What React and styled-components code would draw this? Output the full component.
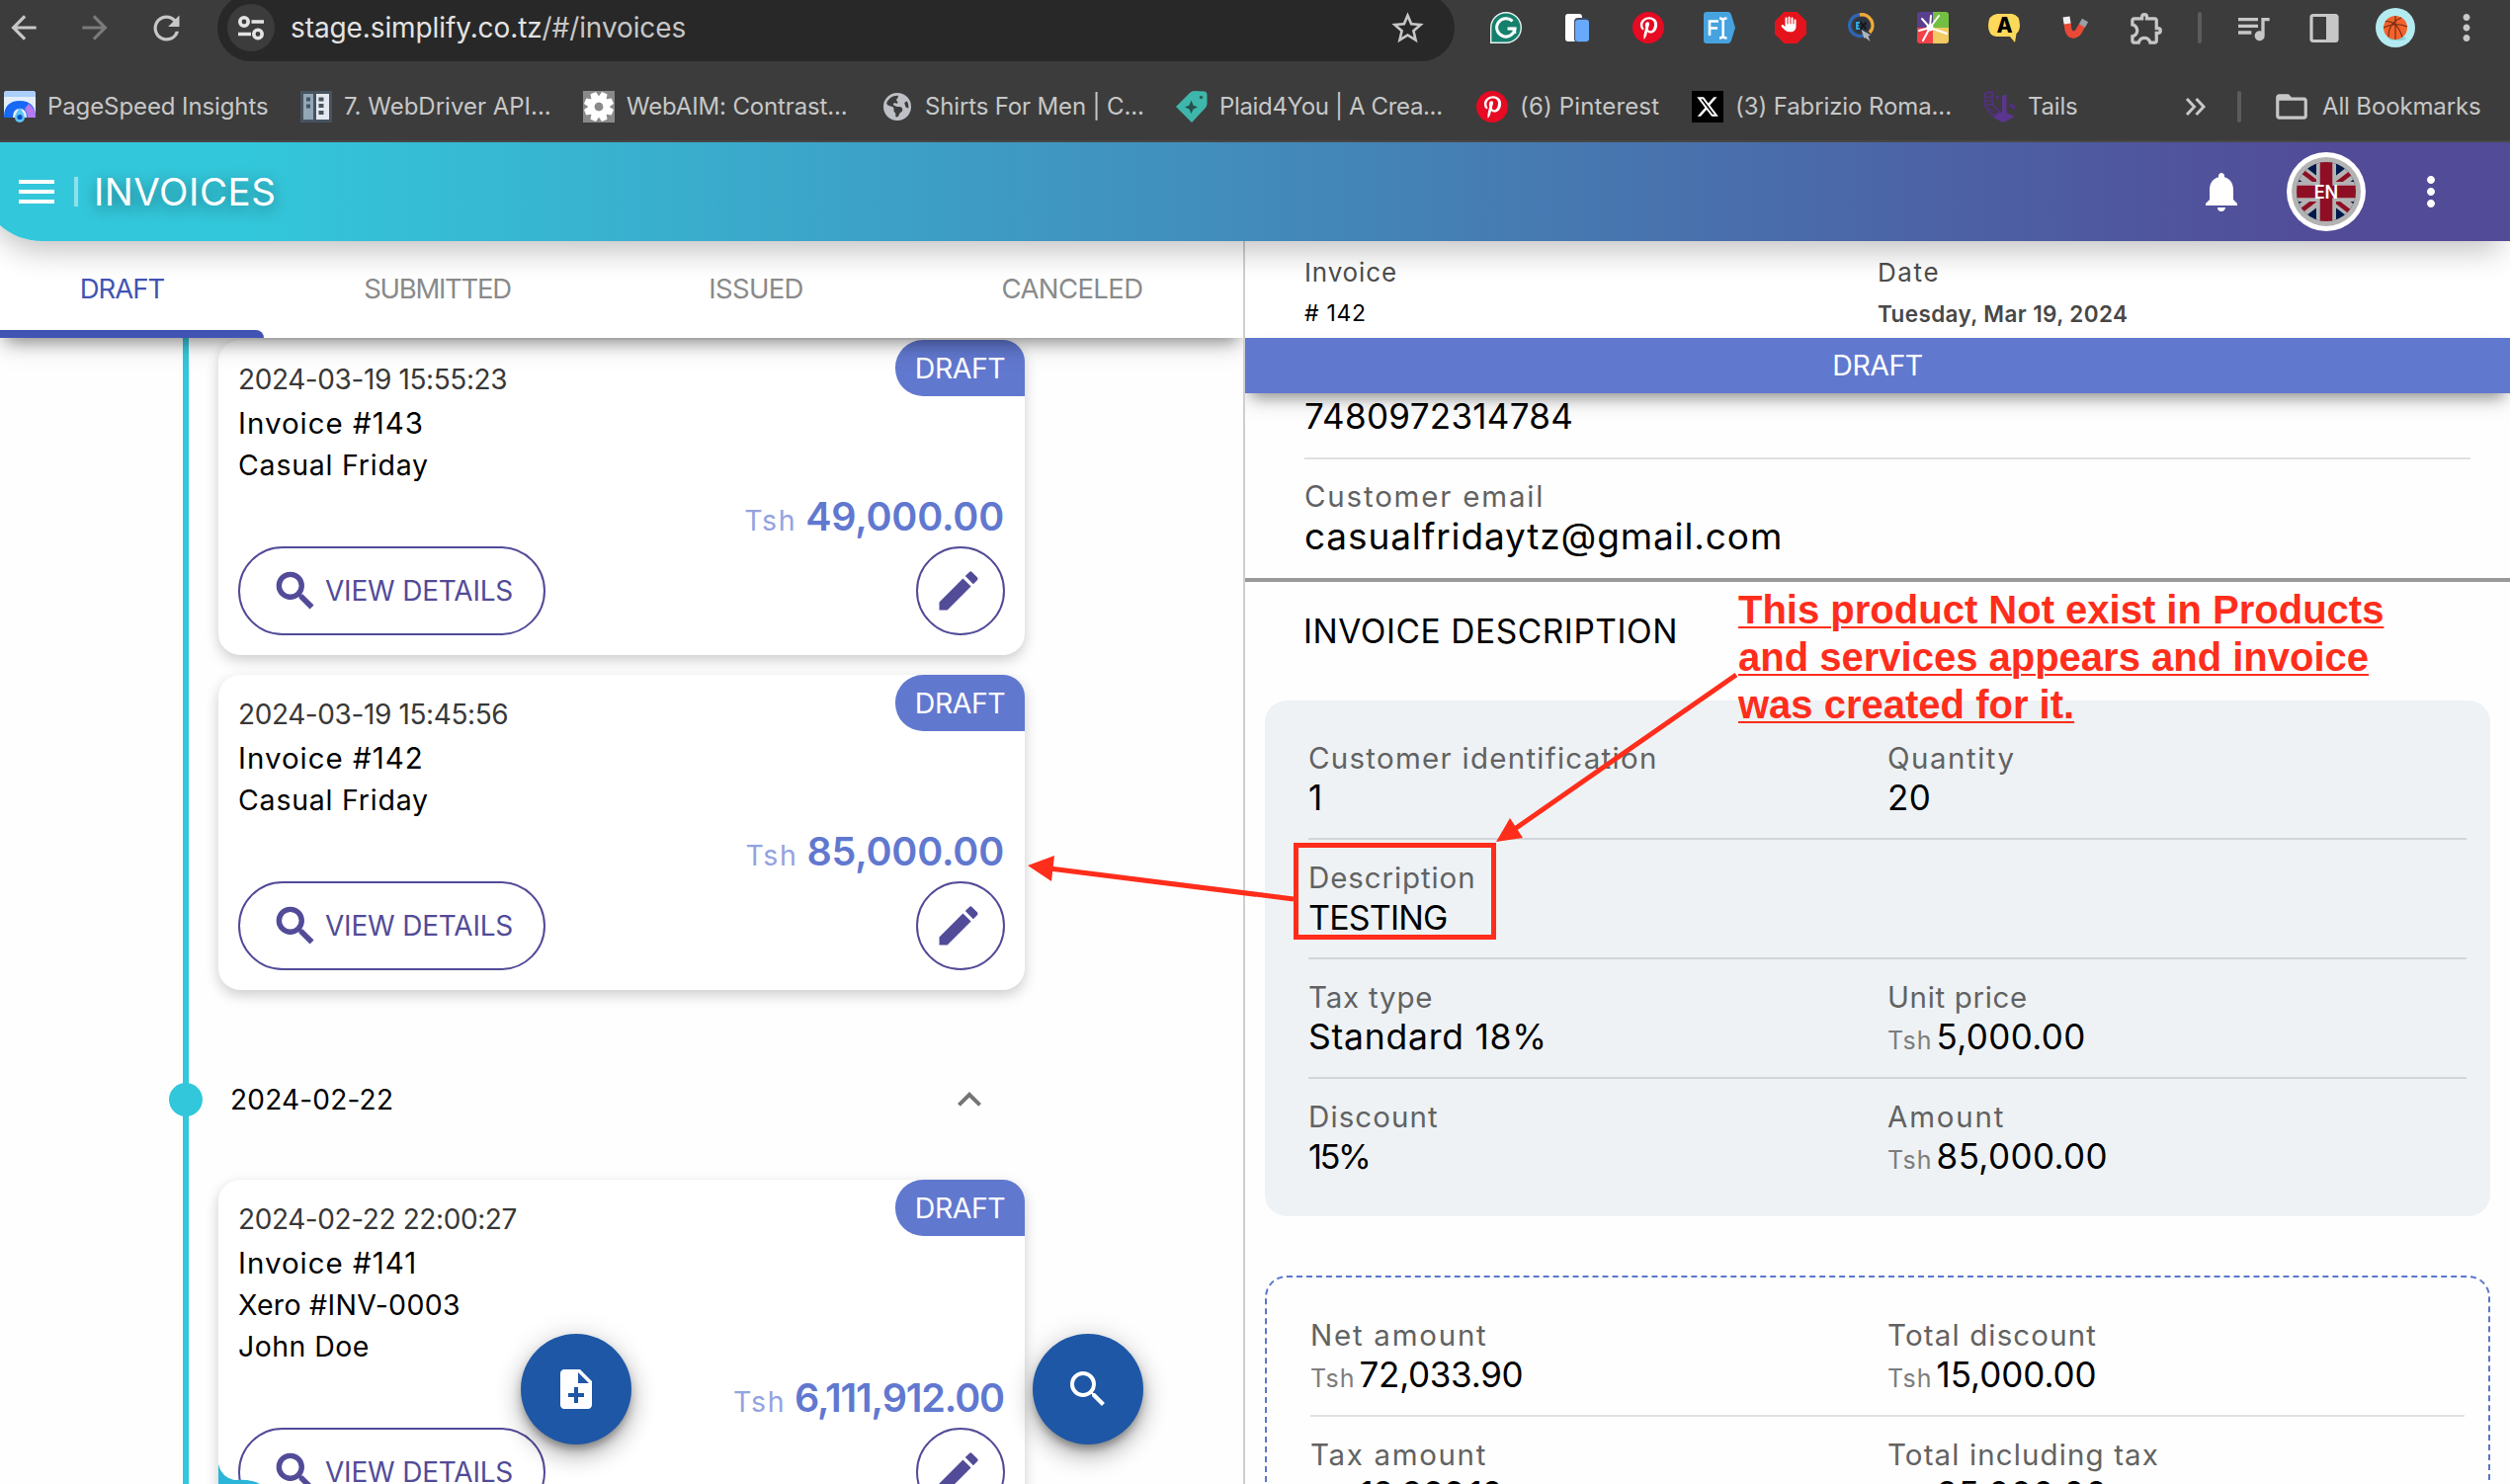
import React from 'react';
import styled, { createGlobalStyle, css } from 'styled-components';
import {
  MdArrowBack, MdArrowForward, MdRefresh, MdStarBorder, MdOutlineExtension, MdQueueMusic,
  MdFolderOpen, MdSearch, MdEdit, MdNotifications, MdMoreVert, MdNoteAdd,
  MdKeyboardArrowUp, MdMenu,
} from 'react-icons/md';
import { FaPinterestP, FaXTwitter, FaHand, FaEarthAmericas } from 'react-icons/fa6';

const teal = '#33c7db';
const violet = '#524b98';
const blue = '#6178cf';
const red = '#ff2d1b';

const GlobalStyle = createGlobalStyle`
  * { box-sizing: border-box; }
  body { margin: 0; background: #fefefe; font-family: Inter, "Open Sans", sans-serif; color: #000; overflow: hidden; }
  svg { display: block; flex: none; }
`;

const text = css`
  white-space: pre;
  letter-spacing: ${(p) => p.$ls || 0}px;
`;

const Page = styled.div`
  position: relative;
  width: 2540px;
  height: 1502px;
  overflow: hidden;
  display: flex;
  flex-direction: column;
`;

/* ---------- browser chrome ---------- */
const Chrome = styled.div`
  height: 144px;
  flex: none;
  background: #3c3c3c;
  border-bottom: 2px solid #474747;
  display: flex;
  flex-direction: column;
  gap: 18px;
`;
const Toolbar = styled.div`
  height: 56px;
  display: flex;
  align-items: center;
`;
const NavButtons = styled.div`
  width: 220px;
  padding-left: 5px;
  display: flex;
  align-items: center;
  gap: 34px;
  color: #c7c7c7;
`;
const UrlBar = styled.div`
  width: 1252px;
  height: 68px;
  border-radius: 34px;
  background: #282828;
  display: flex;
  align-items: center;
  padding: 0 28px 0 10px;
`;
const SiteInfo = styled.div`
  width: 48px;
  height: 48px;
  border-radius: 50%;
  background: #3c3c3c;
  display: grid;
  place-items: center;
`;
const Url = styled.div`
  ${text}
  flex: 1;
  margin-left: 16px;
  font-size: 28px;
  color: #c7c7c7;
  b { font-weight: 400; color: #e3e3e3; }
`;
const Cell = styled.div`
  width: ${(p) => p.$w || 72}px;
  flex: none;
  display: flex;
  justify-content: center;
  align-items: center;
  color: #c7c7c7;
`;
const Separator = styled.div`
  width: 4px;
  height: 32px;
  border-radius: 2px;
  background: #5c5c5c;
`;
const Disc = styled.div`
  width: ${(p) => p.$size || 32}px;
  height: ${(p) => p.$size || 32}px;
  border-radius: 50%;
  background: ${(p) => p.$bg};
  color: #fff;
  display: grid;
  place-items: center;
`;
const XTile = styled.div`
  width: 32px;
  height: 32px;
  background: #000;
  color: #fff;
  display: grid;
  place-items: center;
`;
const Bookmarks = styled.div`
  height: 68px;
  display: flex;
  align-items: center;
  padding-left: 4px;
`;
const Bookmark = styled.div`
  width: ${(p) => p.$w}px;
  flex: none;
  display: flex;
  align-items: center;
  gap: 12px;
  color: #c7c7c7;
`;
const BookmarkLabel = styled.span`
  ${text}
  font-size: 24px;
  line-height: 30px;
  padding-bottom: 1px;
`;

/* ---------- app bar ---------- */
const AppBar = styled.header`
  position: relative;
  z-index: 3;
  height: 100px;
  flex: none;
  margin-left: -21px;
  display: flex;
  align-items: center;
  padding: 0 56px 0 34px;
  color: #fff;
  border-bottom-left-radius: 63px;
  background: linear-gradient(90deg, ${teal} 10.5%, ${violet} 93%);
  box-shadow: 0 20px 30px -10px rgba(0, 0, 0, 0.24);
`;
const BarRule = styled.div`
  width: 4px;
  height: 30px;
  margin: 0 16px 0 14px;
  background: rgba(255, 255, 255, 0.45);
`;
const Title = styled.h1`
  ${text}
  flex: 1;
  margin: 0;
  font-size: 38.5px;
  font-weight: 400;
  text-shadow: 0 4px 16px rgba(0, 0, 0, 0.45);
`;
const Actions = styled.div`
  display: flex;
  align-items: center;
  gap: 42px;
`;

/* ---------- panels ---------- */
const Main = styled.main`
  flex: 1;
  min-height: 0;
  display: flex;
`;
const ListPanel = styled.section`
  width: 1258px;
  display: flex;
  flex-direction: column;
  overflow: hidden;
`;
const Tabs = styled.nav`
  position: relative;
  z-index: 2;
  height: 98px;
  flex: none;
  display: flex;
  background: #fff;
  box-shadow: 0 10px 16px -6px rgba(0, 0, 0, 0.42), 0 12px 26px 0 rgba(0, 0, 0, 0.08);
`;
const Tab = styled.div`
  ${text}
  position: relative;
  width: ${(p) => p.$w}px;
  flex: none;
  padding: 0 ${(p) => (p.$active ? 20 : 0)}px 2px 0;
  display: flex;
  align-items: center;
  justify-content: center;
  font-size: 27.5px;
  color: ${(p) => (p.$active ? '#4154b3' : '#8a8a8a')};
  ${(p) => p.$active && css`
    &::after {
      content: '';
      position: absolute;
      left: 0;
      right: 0;
      bottom: 0;
      height: 8px;
      border-top-right-radius: 8px;
      background: #4154b3;
    }
  `}
`;
const Timeline = styled.div`
  flex: 1;
  min-height: 0;
  margin-left: 185px;
  border-left: 6px solid ${teal};
  padding: 2px 0 0 30px;
  display: flex;
  flex-direction: column;
  gap: 20px;
`;
const Card = styled.article`
  position: relative;
  width: 816px;
  flex: none;
  padding: 19px 20px 20px;
  border-radius: 22px;
  background: #fff;
  box-shadow: 0 5px 14px rgba(0, 0, 0, 0.2);
`;
const Badge = styled.div`
  ${text}
  position: absolute;
  top: 0;
  right: 0;
  width: 131px;
  height: 57px;
  border-radius: 28px 22px 0 28px;
  background: ${blue};
  color: #fff;
  font-size: 28.5px;
  display: grid;
  place-items: center;
`;
const Stamp = styled.div`
  ${text}
  font-size: 28px;
  line-height: 43px;
  color: #383838;
`;
const InvoiceNo = styled.div`
  ${text}
  font-size: 29.5px;
  line-height: 44px;
`;
const Party = styled.div`
  ${text}
  font-size: 28.5px;
  line-height: 42px;
`;
const CardTotal = styled.div`
  ${text}
  height: 61px;
  padding-right: 1px;
  display: flex;
  justify-content: flex-end;
  align-items: baseline;
  line-height: 62px;
  font-size: 39.5px;
  font-weight: 600;
  color: ${blue};
`;
const CardCurrency = styled.span`
  font-size: 28.5px;
  font-weight: 400;
  letter-spacing: 1.6px;
  margin-right: 9px;
  color: #93a3e0;
`;
const CardActions = styled.div`
  display: flex;
  justify-content: space-between;
`;
const Pill = styled.button`
  ${text}
  width: 311px;
  height: 90px;
  padding: 0 0 0 31px;
  display: flex;
  align-items: center;
  gap: 5px;
  border: 2.5px solid ${violet};
  border-radius: 45px;
  background: none;
  color: ${violet};
  font: 400 28px Inter, sans-serif;
  path:not([fill='none']) { stroke: currentColor; stroke-width: 0.6; }
`;
const RoundButton = styled.button`
  width: 90px;
  height: 90px;
  padding: 0 5px 0 0;
  display: grid;
  place-items: center;
  border: 2.5px solid ${violet};
  border-radius: 50%;
  background: none;
  color: ${violet};
`;
const DateRow = styled.div`
  ${text}
  position: relative;
  width: 816px;
  height: 162px;
  flex: none;
  margin: 10px 0 -20px;
  padding: 0 32px 0 12px;
  display: flex;
  align-items: center;
  justify-content: space-between;
  font-size: 28px;
  &::before {
    content: '';
    position: absolute;
    left: -50px;
    width: 34px;
    height: 34px;
    border-radius: 50%;
    background: ${teal};
  }
  svg { color: #757575; }
`;
const Wave = styled.svg`
  position: absolute;
  left: 221px;
  bottom: 0;
`;
const Fab = styled.button`
  position: absolute;
  z-index: 4;
  top: 1350px;
  left: ${(p) => p.$x}px;
  width: 112px;
  height: 112px;
  padding: 0;
  display: grid;
  place-items: center;
  border: 0;
  border-radius: 50%;
  background: #1e57a6;
  color: #fff;
  box-shadow: 0 6px 10px -2px rgba(0, 0, 0, 0.35), 0 12px 24px rgba(0, 0, 0, 0.24), 0 2px 30px rgba(0, 0, 0, 0.12);
`;

/* ---------- invoice detail ---------- */
const Detail = styled.section`
  flex: 1;
  min-width: 0;
  border-left: 2px solid #cfcfcf;
  display: flex;
  flex-direction: column;
  overflow: hidden;
  & > * { flex: none; }
`;
const DetailHead = styled.div`
  height: 98px;
  padding: 11px 60px 0 60px;
  display: grid;
  grid-template-columns: 580px 1fr;
  background: #fff;
`;
const HeadLabel = styled.div`
  ${text}
  font-size: 26px;
  line-height: 42px;
  color: #4d4d4d;
`;
const HeadValue = styled.div`
  ${text}
  font-size: ${(p) => (p.$bold ? 22.5 : 23)}px;
  font-weight: ${(p) => (p.$bold ? 600 : 400)};
  line-height: 41px;
  color: ${(p) => (p.$bold ? '#484848' : '#000')};
`;
const StatusBar = styled.div`
  ${text}
  position: relative;
  z-index: 2;
  height: 56px;
  display: grid;
  place-items: center;
  background: ${blue};
  color: #fff;
  font-size: 28.5px;
  line-height: 55px;
  padding-bottom: 1px;
  box-shadow: 0 10px 16px -6px rgba(0, 0, 0, 0.42), 0 12px 26px 0 rgba(0, 0, 0, 0.06);
`;
const Customer = styled.div`
  padding: 3px 40px 0 60px;
  border-bottom: 4px solid #999;
`;
const Phone = styled.div`
  height: 64px;
  border-bottom: 2px solid #e0e0e0;
`;
const SectionTitle = styled.h2`
  ${text}
  margin: 0;
  height: 120px;
  padding-left: 59px;
  font-size: 33.5px;
  font-weight: 400;
  line-height: 101px;
`;
const Group = styled.div`
  margin: ${(p) => (p.$dashed ? '60px' : 0)} 20px 0;
  padding: 20px 24px 18px 44px;
  border-radius: 22px;
  ${(p) => (p.$dashed
    ? css`border: 2px dashed #5b76cc; height: 400px;`
    : css`background: #eef2f5;`)}
`;
const FieldRow = styled.div`
  height: ${(p) => (p.$last ? 120 : 121)}px;
  padding-top: ${(p) => (p.$last ? 17 : 18)}px;
  display: grid;
  grid-template-columns: 1fr 1fr;
  border-bottom: ${(p) => (p.$last ? '0' : `2px solid ${p.$line || '#e0e0e0'}`)};
`;
const Label = styled.div`
  ${text}
  font-size: 29.5px;
  line-height: 40px;
  color: #626262;
`;
const Value = styled.div`
  ${text}
  height: 40px;
  display: flex;
  align-items: baseline;
  font-size: ${(p) => p.$size || 35}px;
  line-height: 41px;
`;
const Currency = styled.span`
  font-size: 25px;
  letter-spacing: 1.1px;
  margin-right: 4px;
  color: #7d7d7d;
`;

/* ---------- review notes ---------- */
const Marks = styled.svg`
  position: absolute;
  z-index: 5;
  left: 0;
  top: 0;
  pointer-events: none;
`;
const Note = styled.div`
  position: absolute;
  z-index: 5;
  left: 1759px;
  top: 593px;
  font: 700 40px/48px "Liberation Sans", Arial, sans-serif;
  color: ${red};
  white-space: pre;
  text-decoration: underline;
  text-decoration-thickness: 2px;
  text-underline-offset: 3px;
`;

/* ---------- drawings ---------- */
const TuneIcon = () => (
  <svg width="28" height="40" viewBox="0 0 28 40" fill="none" stroke="#e3e3e3" strokeWidth="3.6">
    <circle cx="7" cy="14" r="4.2" /><path d="M14.5 14H27M1 26.500H14" /><circle cx="21" cy="26.500" r="4.200" />
  </svg>
);
const Grammarly = () => (
  <svg width="32" height="32" viewBox="0 0 32 32">
    <path d="M.7 31.300V16A15.300 15.300 0 1 1 16 31.300Z" fill="#15806c" stroke="#e8f2ef" strokeWidth="1.400" />
    <path d="M22.500 9.500A9.200 9.200 0 1 0 25 17H17.500" fill="none" stroke="#fff" strokeWidth="3" />
    <path d="M20 17h5v5" fill="none" stroke="#fff" strokeWidth="2.500" />
  </svg>
);
const Pages = () => (
  <svg width="26" height="32" viewBox="0 0 26 32">
    <rect x="1" y="2" width="17" height="28" rx="3" fill="#fff" />
    <rect x="10" y="6" width="15" height="25" rx="4" fill="#3f4a66" />
    <rect x="11" y="8" width="14" height="22" rx="3" fill="#68a9fb" />
  </svg>
);
const FontTag = () => (
  <svg width="32" height="32" viewBox="0 0 32 32">
    <path d="M3 0H25Q27 0 28 3L32 16L28 29Q27 32 25 32H3Q0 32 0 29V3Q0 0 3 0Z" fill="#46a3df" />
    <path d="M6 24V9.500H15M6 16.500H14M16 6.500Q19.500 6.500 19.500 9Q19.500 6.500 23.500 6.500M19.700 8V24.500M16 26.500Q19.500 26.500 19.500 24Q19.500 26.500 23.500 26.500" fill="none" stroke="#fff" strokeWidth="2.600" />
  </svg>
);
const StopHand = () => (
  <svg width="32" height="32" viewBox="0 0 32 32">
    <path d="M9.500 0H22.500L32 9.500V22.500L22.500 32H9.500L0 22.500V9.500Z" fill="#e5141c" />
    <FaHand x="6.500" y="4.500" width="19" height="22" color="#fff" />
  </svg>
);
const CxRing = () => (
  <svg width="32" height="32" viewBox="0 0 32 32">
    <circle cx="16" cy="13.500" r="8" fill="#2c3440" />
    <path d="M14 3A10.800 10.800 0 1 0 18 24" fill="none" stroke="#2f66b5" strokeWidth="3.400" />
    <path d="M14 3A10.800 10.800 0 0 1 24 21" fill="none" stroke="#efab3a" strokeWidth="3.400" />
    <path d="M11 10.500v6.500M10 11h4M10 14h3M10 17h4" stroke="#2fa9e0" strokeWidth="1.800" />
    <path d="M14.500 10.500l6 7M20.500 10.500l-6 7" stroke="#15181c" strokeWidth="2" />
    <path d="M15.500 18L25 23.500L22.500 24.500L24.500 30L19.500 26L18.500 27Z" fill="#aeb6be" />
  </svg>
);
const Pinwheel = () => (
  <svg width="32" height="32" viewBox="0 0 32 32">
    <clipPath id="pw"><rect width="32" height="32" rx="3" /></clipPath>
    <g clipPath="url(#pw)">
      <path d="M0 0H16V16H0Z" fill="#5a3f8f" /><path d="M16 0H32V16H16Z" fill="#73bf44" />
      <path d="M0 16H16V32H0Z" fill="#f04248" /><path d="M16 16H32V32H16Z" fill="#f1ca64" />
      <g stroke="#fff" strokeLinecap="round">
        <path d="M13 16L5 7M13 16L14 4M13 16L22 4M13 16L2 19M13 16L30 22M13 16L6 29" strokeWidth="2" />
      </g>
      <circle cx="13" cy="16" r="3.500" fill="#fff" />
    </g>
  </svg>
);
const SpeechA = () => (
  <svg width="32" height="32" viewBox="0 0 32 32">
    <path d="M9 2H24Q32 3 32 14Q32 19 28.500 22L27 31L22 25H8Q0 24 0 14Q0 3 9 2Z" fill="#fdd95b" />
    <text x="16.500" y="20.500" fontFamily="Inter, sans-serif" fontSize="21" fontWeight="800" textAnchor="middle">A</text>
  </svg>
);
const Magnet = () => (
  <svg width="32" height="32" viewBox="0 0 32 32" fill="none" strokeWidth="7">
    <path d="M8 11L9 18Q10.500 24 15.500 23Q19 22 21 17L23.500 13" stroke="#ea4a35" />
    <path d="M7 5L8.100 12" stroke="#f1f1f1" />
    <path d="M23 14L26 8.500" stroke="#9aa0a6" />
  </svg>
);
const SidePanel = () => (
  <svg width="32" height="32" viewBox="0 0 32 32">
    <rect x="3" y="3.500" width="26" height="26" rx="2" fill="none" stroke="#c7c7c7" strokeWidth="3.200" />
    <path d="M18 3H29V30H18Z" fill="#c7c7c7" />
  </svg>
);
const Basketball = () => (
  <svg width="40" height="40" viewBox="0 0 40 40">
    <circle cx="20" cy="20" r="20" fill="#b4ebf1" />
    <ellipse cx="22" cy="31" rx="9" ry="2" fill="#86d3dd" />
    <circle cx="20" cy="20" r="12" fill="#f4622a" />
    <path d="M20 8V32M8 20Q20 14 32 19M10 13.500Q22 13 27 29.500M13 29.500Q13 15 26 10" fill="none" stroke="#6b2a17" strokeWidth="1.100" />
  </svg>
);
const PageSpeed = () => (
  <svg width="32" height="32" viewBox="0 0 32 32">
    <rect width="32" height="27" rx="3" fill="#e4eefb" />
    <path d="M0 6V3Q0 0 3 0H29Q32 0 32 3V6Z" fill="#a9cffa" />
    <path d="M0 27Q0 10 16 10Q32 10 32 27H23Q23 18 16 18Q9 18 9 27Z" fill="#1668f5" />
    <path d="M25 13Q32 18 32 27H24Q23 21 21 18Z" fill="#b579f0" />
    <path d="M16 17Q21 24 21 27A5 5 0 1 1 11 27Q11 24 16 17Z" fill="#5cc3f5" />
    <circle cx="16" cy="26.500" r="2.600" fill="#0b50c8" />
  </svg>
);
const Servers = () => (
  <svg width="32" height="32" viewBox="0 0 32 32">
    <path d="M0 0H32V32H0Z" fill="#47545f" />
    <path d="M3 3H13V29H3Z" fill="#92a7b7" /><path d="M16 3H29V29H16Z" fill="#e3e9ee" />
    <path d="M6 6.500h4v4h-4zM6 13.500h4v4h-4zM18.500 6.500h5v4h-5zM18.500 13h5v4h-5zM18.500 20h5v4h-5z" fill="#47545f" />
  </svg>
);
const Gear = () => (
  <svg width="32" height="32" viewBox="-16 -16 32 32">
    <path d="M-16 -16H16V16H-16Z" fill="#8a8a8a" />
    {[0, 45, 90, 135, 180, 225, 270, 315].map((a) => (
      <path key={a} d="M-4.500 -8L-3 -15H3L4.500 -8Z" fill="#fff" transform={`rotate(${a + 22.5})`} />
    ))}
    <circle r="7.500" fill="none" stroke="#fff" strokeWidth="6.500" />
    <circle r="4.300" fill="#8a8a8a" />
  </svg>
);
const PriceTag = () => (
  <svg width="32" height="32" viewBox="0 0 32 32">
    <path d="M14 2Q16 0 19 0L29 .5Q31.500 1 31.500 4V13Q31.500 15 30 17L16 32L0 16Z" fill="#3fb6ac" />
    <circle cx="25.500" cy="6.500" r="1.700" fill="#2b5e5b" />
    <path d="M15.500 9.500L17.500 14.500L22 16.500L17.500 18.500L15.500 23L13.500 18.500L9 16.500L13.500 14.500Z" fill="#23514e" />
  </svg>
);
const TailsLogo = () => (
  <svg width="32" height="32" viewBox="0 0 32 32">
    <path d="M1 2.500L8 .5V13.500L16 22L8 25L1 15Z" fill="none" stroke="#532f80" strokeWidth="1.900" />
    <path d="M2 6H8M2 10H8M2 14H8M3 17L10 21" stroke="#532f80" strokeWidth="1.400" />
    <path d="M18 5L22.500 3.500V22L31 26L19 32L9 27L18 21Z" fill="#5b3590" />
    <path d="M11.500 5h3v3h-3zM26 12L31 15V19L26 16Z" fill="#532f80" />
  </svg>
);
const Chevrons = () => (
  <svg width="22" height="20" viewBox="0 0 22 20" fill="none" stroke="#c7c7c7" strokeWidth="3">
    <path d="M2 2L9.500 10L2 18M11.500 2L19 10L11.500 18" />
  </svg>
);
const Flag = () => (
  <svg width="80" height="80" viewBox="-40 -40 80 80">
    <clipPath id="fl"><circle r="30" /></clipPath>
    <circle r="40" fill="#fff" /><circle r="35" fill="#b3b3b3" />
    <g clipPath="url(#fl)">
      <path d="M-30 -30H30V30H-30Z" fill="#00194b" />
      <path d="M-34 -26L34 26M34 -26L-34 26" stroke="#b3b3b3" strokeWidth="14" />
      <path d="M-34 -28L0 -2M34 -26L0 0M34 28L0 2M-34 26L0 0" stroke="#8e0f24" strokeWidth="4.500" />
      <path d="M0 -31V31M-31 0H31" stroke="#b3b3b3" strokeWidth="20" />
      <path d="M0 -31V31M-31 0H31" stroke="#8e0f24" strokeWidth="12.500" />
    </g>
    <text y="6.500" fill="#fff" fontFamily="Inter, sans-serif" fontSize="18" fontWeight="600" textAnchor="middle">EN</text>
  </svg>
);

/* ---------- data ---------- */
const bookmarks = [
  { w: 300, icon: <PageSpeed />, label: 'PageSpeed Insights', ls: -0.1 },
  { w: 286, icon: <Servers />, label: '7. WebDriver API...' },
  { w: 302, icon: <Gear />, label: 'WebAIM: Contrast...', ls: -0.15 },
  { w: 298, icon: <Cell $w={32}><FaEarthAmericas size={28} color="#bdc1c6" /></Cell>, label: 'Shirts For Men | C...', ls: -0.15 },
  { w: 304, icon: <PriceTag />, label: 'Plaid4You | A Crea...', ls: -0.35 },
  { w: 218, icon: <Disc $bg="#e60a23"><FaPinterestP size={23} /></Disc>, label: '(6) Pinterest', ls: 0.15 },
  { w: 296, icon: <XTile><FaXTwitter size={24} /></XTile>, label: '(3) Fabrizio Roma...', ls: -0.1 },
  { w: 204, icon: <TailsLogo />, label: 'Tails', ls: -0.2 },
];

const extensions = [
  <Grammarly />, <Pages />, <Disc $bg="#e60a23"><FaPinterestP size={23} /></Disc>, <FontTag />, <StopHand />,
  <CxRing />, <Pinwheel />, <SpeechA />, <Magnet />, <MdOutlineExtension size={39} />,
];

const InvoiceCard = ({ stamp, no, parties, total, totalLs }) => (
  <Card>
    <Badge $ls={-0.5}>DRAFT</Badge>
    <Stamp $ls={-0.4}>{stamp}</Stamp>
    <InvoiceNo $ls={1.0}>{no}</InvoiceNo>
    {parties.map(([name, ls]) => <Party key={name} $ls={ls}>{name}</Party>)}
    <CardTotal $ls={totalLs}><CardCurrency>Tsh</CardCurrency>{total}</CardTotal>
    <CardActions>
      <Pill $ls={-0.2}><MdSearch size={50} />VIEW DETAILS</Pill>
      <RoundButton><MdEdit size={52} /></RoundButton>
    </CardActions>
  </Card>
);

const Field = ({ label, ls, value, vls, size, money }) => (
  <div>
    <Label $ls={ls}>{label}</Label>
    <Value $ls={vls} $size={size}>{money && <Currency>Tsh</Currency>}{value}</Value>
  </div>
);

export default function App() {
  return (
    <Page>
      <GlobalStyle />
      <Chrome>
        <Toolbar>
          <NavButtons>
            <MdArrowBack size={38} /><MdArrowForward size={38} color="#7a7a7a" /><MdRefresh size={39} />
          </NavButtons>
          <UrlBar>
            <SiteInfo><TuneIcon /></SiteInfo>
            <Url $ls={-0.1}><b>stage.simplify.co.tz</b>/#/invoices</Url>
            <MdStarBorder size={39} color="#c7c7c7" />
          </UrlBar>
          <Cell $w={16} />
          {extensions.map((icon, i) => <Cell key={i}>{icon}</Cell>)}
          <Cell $w={36}><Separator /></Cell>
          <Cell><MdQueueMusic size={40} /></Cell>
          <Cell><SidePanel /></Cell>
          <Cell><Basketball /></Cell>
          <Cell><MdMoreVert size={42} /></Cell>
        </Toolbar>
        <Bookmarks>
          {bookmarks.map((b) => (
            <Bookmark key={b.label} $w={b.w}>{b.icon}<BookmarkLabel $ls={b.ls}>{b.label}</BookmarkLabel></Bookmark>
          ))}
          <Cell $w={20}><Chevrons /></Cell>
          <Cell $w={68}><Separator /></Cell>
          <Bookmark $w={230}><MdFolderOpen size={38} /><BookmarkLabel $ls={-0.14}>All Bookmarks</BookmarkLabel></Bookmark>
        </Bookmarks>
      </Chrome>

      <AppBar>
        <MdMenu size={48} />
        <BarRule />
        <Title $ls={0.5}>INVOICES</Title>
        <Actions>
          <MdNotifications size={48} />
          <Flag />
          <MdMoreVert size={48} />
        </Actions>
      </AppBar>

      <Main>
        <ListPanel>
          <Tabs>
            <Tab $active $w={267} $ls={-1}>DRAFT</Tab>
            <Tab $w={351} $ls={-1.3}>SUBMITTED</Tab>
            <Tab $w={294} $ls={-0.7}>ISSUED</Tab>
            <Tab $w={346} $ls={-0.6}>CANCELED</Tab>
          </Tabs>
          <Timeline>
            <InvoiceCard stamp="2024-03-19 15:55:23" no="Invoice #143" parties={[['Casual Friday', 0.78]]} total="49,000.00" totalLs={-0.2} />
            <InvoiceCard stamp="2024-03-19 15:45:56" no="Invoice #142" parties={[['Casual Friday', 0.78]]} total="85,000.00" totalLs={-0.2} />
            <DateRow $ls={0.2}>2024-02-22<MdKeyboardArrowUp size={48} /></DateRow>
            <InvoiceCard stamp="2024-02-22 22:00:27" no="Invoice #141" parties={[['Xero #INV-0003', 0.3], ['John Doe', 0.45]]} total="6,111,912.00" totalLs={-1.14} />
          </Timeline>
        </ListPanel>

        <Detail>
          <DetailHead>
            <div><HeadLabel $ls={0.85}>Invoice</HeadLabel><HeadValue $ls={0.7}># 142</HeadValue></div>
            <div><HeadLabel $ls={1.6}>Date</HeadLabel><HeadValue $bold $ls={0.38}>Tuesday, Mar 19, 2024</HeadValue></div>
          </DetailHead>
          <StatusBar $ls={-0.5}>DRAFT</StatusBar>
          <Customer>
            <Phone><Value $ls={0.3}>7480972314784</Value></Phone>
            <FieldRow $last>
              <Field label="Customer email" ls={1.8} value="casualfridaytz@gmail.com" vls={0.87} size={37} />
            </FieldRow>
          </Customer>
          <SectionTitle $ls={0.55}>INVOICE DESCRIPTION</SectionTitle>
          <Group>
            <FieldRow $line="#d1d5d9">
              <Field label="Customer identification" ls={1.27} value="1" />
              <Field label="Quantity" ls={1.5} value="20" vls={0.5} />
            </FieldRow>
            <FieldRow $line="#d1d5d9">
              <Field label="Description" ls={0.9} value="TESTING" vls={-0.8} size={34} />
            </FieldRow>
            <FieldRow $line="#d1d5d9">
              <Field label="Tax type" ls={0.8} value="Standard 18%" vls={0.75} size={35.5} />
              <Field label="Unit price" ls={0.65} money value="5,000.00" vls={0.35} />
            </FieldRow>
            <FieldRow $line="transparent">
              <Field label="Discount" ls={1.1} value="15%" vls={-2.5} size={34.5} />
              <Field label="Amount" ls={1.8} money value="85,000.00" vls={0.4} />
            </FieldRow>
          </Group>
          <Group $dashed>
            <FieldRow>
              <Field label="Net amount" ls={1.75} money value="72,033.90" vls={-0.3} />
              <Field label="Total discount" ls={1.15} money value="15,000.00" vls={-0.05} />
            </FieldRow>
            <FieldRow>
              <Field label="Tax amount" ls={1.65} money value="12,966.10" vls={-0.9} />
              <Field label="Total including tax" ls={1.12} money value="85,000.00" vls={0.35} />
            </FieldRow>
          </Group>
        </Detail>
      </Main>

      <Wave width="42" height="20" viewBox="0 0 42 20"><path d="M0 0Q3 13 16 16Q34 15 42 20H0Z" fill="#2bb5d8" /></Wave>
      <Fab $x={527}><MdNoteAdd size={48} /></Fab>
      <Fab $x={1045}><MdSearch size={48} /></Fab>

      <Marks width="2540" height="1502" viewBox="0 0 2540 1502">
        <rect x="1311.500" y="855.500" width="200" height="93" fill="none" stroke={red} strokeWidth="5" />
        <path d="M1757 683L1530 841M1309 910L1062 879" stroke={red} strokeWidth="5" />
        <path d="M1514 852L1528 828L1541 848ZM1040 876L1067 866L1064 892Z" fill={red} />
      </Marks>
      <Note>{'This product Not exist in Products\nand services appears and invoice\nwas created for it.'}</Note>
    </Page>
  );
}
